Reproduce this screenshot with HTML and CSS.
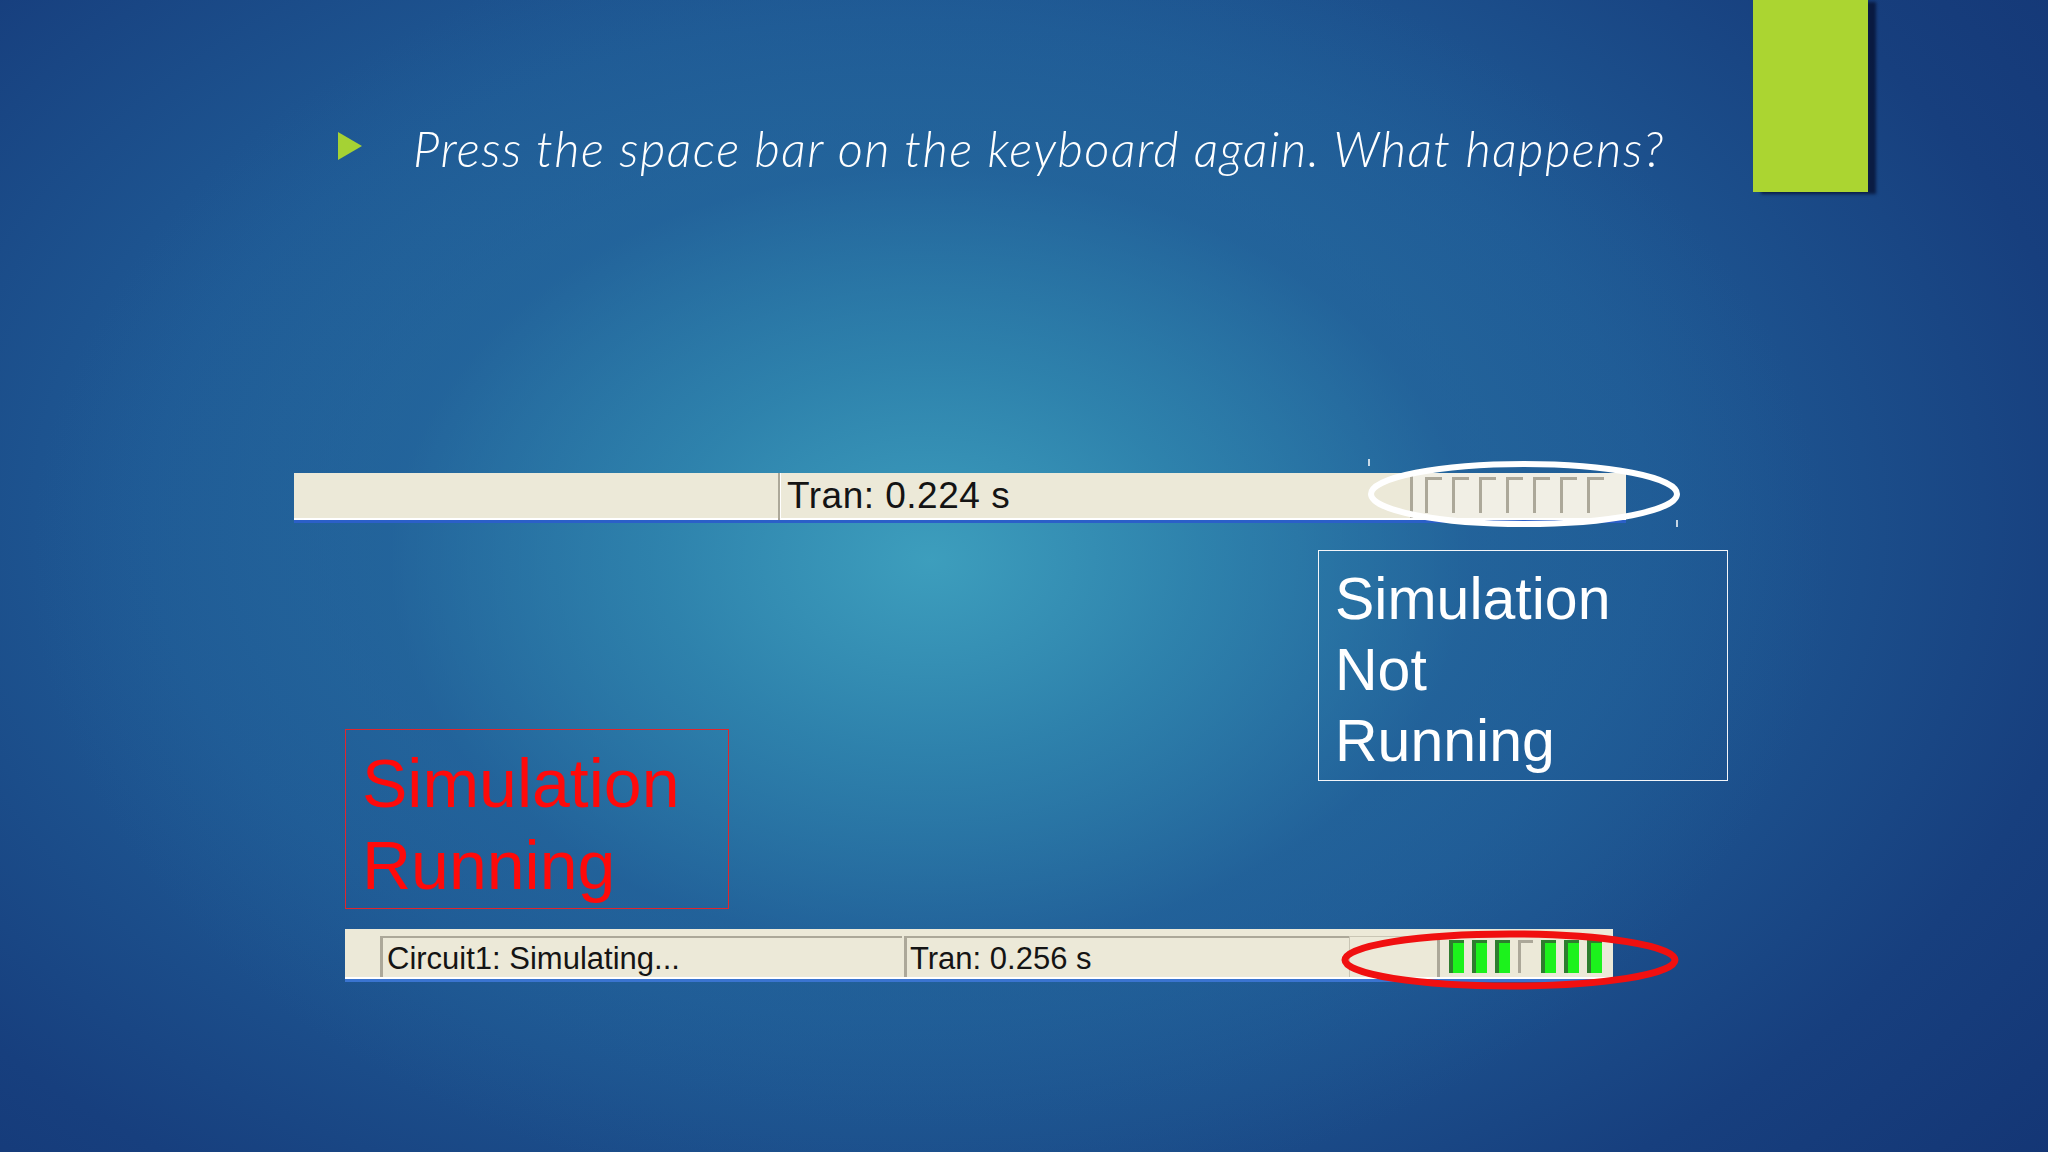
FILE: index.html
```html
<!DOCTYPE html>
<html>
<head>
<meta charset="utf-8">
<link rel="stylesheet" href="styles.css">
</head>
<body>
<div class="slide">
  <div class="accent"></div>

  <div class="title-row">
    <svg class="bullet" width="24" height="28" viewBox="0 0 24 28"><polygon points="0,0 24,14 0,28" fill="#a5d234"/></svg>
    <span class="title">Press the space bar on the keyboard again. What happens?</span>
  </div>

  <div class="statusbar bar-top">
    <div class="sb-panel p1"></div>
    <div class="sb-panel p2"><span class="sb-text">Tran: 0.224 s</span></div>
    <div class="meter meter-top">
      <span class="tick"></span><span class="tick"></span><span class="tick"></span><span class="tick"></span><span class="tick"></span><span class="tick"></span><span class="tick"></span>
    </div>
  </div>

  <div class="label label-white">Simulation<br>Not<br>Running</div>
  <div class="label label-red">Simulation<br>Running</div>

  <div class="statusbar bar-bottom">
    <div class="bp b1"></div>
    <div class="bp b2"><span class="sb-text small">Circuit1: Simulating...</span></div>
    <div class="bp b3"><span class="sb-text small">Tran: 0.256 s</span></div>
    <div class="bp b4"></div>
    <div class="meter meter-bottom">
      <span class="blk on"></span><span class="blk on"></span><span class="blk on"></span><span class="blk off"></span><span class="blk on"></span><span class="blk on"></span><span class="blk on"></span>
    </div>
  </div>

  <svg class="marks" width="2048" height="1152" viewBox="0 0 2048 1152">
    <ellipse cx="1524" cy="494" rx="153" ry="30" fill="none" stroke="#ffffff" stroke-width="6"/>
    <line x1="1369" y1="459" x2="1369" y2="466" stroke="#ffffff" stroke-width="1.5"/>
    <line x1="1677" y1="520" x2="1677" y2="527" stroke="#ffffff" stroke-width="1.5"/>
    <ellipse cx="1510" cy="960" rx="165" ry="26" fill="none" stroke="#f01010" stroke-width="7"/>
  </svg>
</div>
</body>
</html>
```

FILE: styles.css
```css
html, body {
  margin: 0;
  padding: 0;
  width: 2048px;
  height: 1152px;
  overflow: hidden;
}

.slide {
  position: relative;
  width: 2048px;
  height: 1152px;
  overflow: hidden;
  background:
    radial-gradient(ellipse 900px 650px at 930px 560px, rgba(62,160,190,0.95) 0%, rgba(48,135,175,0.8) 30%, rgba(35,100,155,0.5) 60%, rgba(28,75,135,0) 100%),
    radial-gradient(ellipse 1500px 1000px at 900px 520px, #2a78a8 0%, #1f5a95 50%, #173f7e 80%, #143675 100%);
  font-family: "Liberation Sans", Arial, sans-serif;
}

.accent {
  position: absolute;
  left: 1753px;
  top: 0;
  width: 115px;
  height: 192px;
  background: #abd531;
  box-shadow: 8px 2px 3px rgba(5, 15, 45, 0.75);
}

.title-row {
  position: absolute;
  left: 338px;
  top: 118px;
  display: flex;
  align-items: center;
  gap: 51px;
  height: 60px;
}

.bullet {
  display: block;
  margin-top: -4px;
}

.title {
  font-family: Lato, "Open Sans", sans-serif;
  font-style: italic;
  font-weight: 300;
  font-size: 49px;
  line-height: 60px;
  color: #ffffff;
  letter-spacing: 1.5px;
  white-space: nowrap;
}

/* status bars */
.statusbar {
  position: absolute;
  display: flex;
  background: #ece9d8;
  box-sizing: border-box;
  box-shadow: inset 0 -2px 0 #ffffff;
}

.sb-text {
  font-family: "Liberation Sans", Tahoma, sans-serif;
  color: #141414;
  white-space: nowrap;
}

.bar-top {
  left: 294px;
  top: 473px;
  width: 1332px;
  height: 50px;
  border-bottom: 3px solid #2b5fc8;
}

.bar-top .p1 {
  width: 484px;
  flex: none;
}

.bar-top .p2 {
  width: 632px;
  flex: none;
  border-left: 2px solid #aca899;
  box-shadow: inset 1px 0 0 #ffffff;
  padding-left: 7px;
  box-sizing: border-box;
  display: flex;
  align-items: center;
}

.bar-top .sb-text {
  font-size: 37px;
  letter-spacing: 0.5px;
  margin-top: -2px;
}

.meter {
  display: flex;
  box-sizing: border-box;
}

.meter-top {
  flex: 1;
  border-left: 3px solid #aca899;
  background: #f1efe5;
  padding: 4px 0 5px 12px;
  gap: 10px;
  margin-bottom: 2px;
}

.tick {
  width: 17px;
  flex: none;
  border-left: 3px solid #aca899;
  border-top: 3px solid #aca899;
  box-sizing: border-box;
}

.bar-bottom {
  left: 345px;
  top: 929px;
  width: 1268px;
  height: 53px;
  padding-top: 7px;
  border-bottom: 3px solid #3a74d0;
}

.bp {
  box-sizing: border-box;
  border-top: 2px solid #aca899;
  margin-bottom: 2px;
  flex: none;
  display: flex;
  align-items: center;
}

.b1 {
  width: 30px;
  border-top: none;
}

.b2 {
  width: 522px;
  border-left: 3px solid #aca899;
  margin-left: 5px;
  padding-left: 4px;
}

.b3 {
  width: 445px;
  border-left: 3px solid #aca899;
  margin-left: 2px;
  padding-left: 3px;
}

.b4 {
  width: 88px;
  border-top: 1px solid #c9c5b4;
  border-left: 1px solid #c9c5b4;
}

.sb-text.small {
  font-size: 31px;
  margin-top: 2px;
}

.meter-bottom {
  flex: 1;
  border-left: 3px solid #aca899;
  padding: 4px 0 4px 9px;
  gap: 8px;
  margin-bottom: 2px;
}

.blk {
  width: 15px;
  flex: none;
  box-sizing: border-box;
}

.blk.on {
  background: #1cf21c;
  border-left: 4px solid #2e7d2e;
  border-top: 3px solid #2e7d2e;
}

.blk.off {
  border-left: 3px solid #aca899;
  border-top: 3px solid #aca899;
}

/* labels */
.label {
  position: absolute;
  box-sizing: border-box;
  font-family: "Liberation Sans", Arial, sans-serif;
}

.label-white {
  left: 1318px;
  top: 550px;
  width: 410px;
  height: 231px;
  border: 1.5px solid #f4f6fa;
  color: #ffffff;
  font-size: 59px;
  line-height: 71px;
  padding: 13px 0 0 16px;
}

.label-red {
  left: 345px;
  top: 729px;
  width: 384px;
  height: 180px;
  border: 1.5px solid #e0262c;
  color: #ff0a0a;
  font-size: 68px;
  line-height: 81.6px;
  padding: 13px 0 0 16px;
}

.marks {
  position: absolute;
  left: 0;
  top: 0;
  pointer-events: none;
}
```
